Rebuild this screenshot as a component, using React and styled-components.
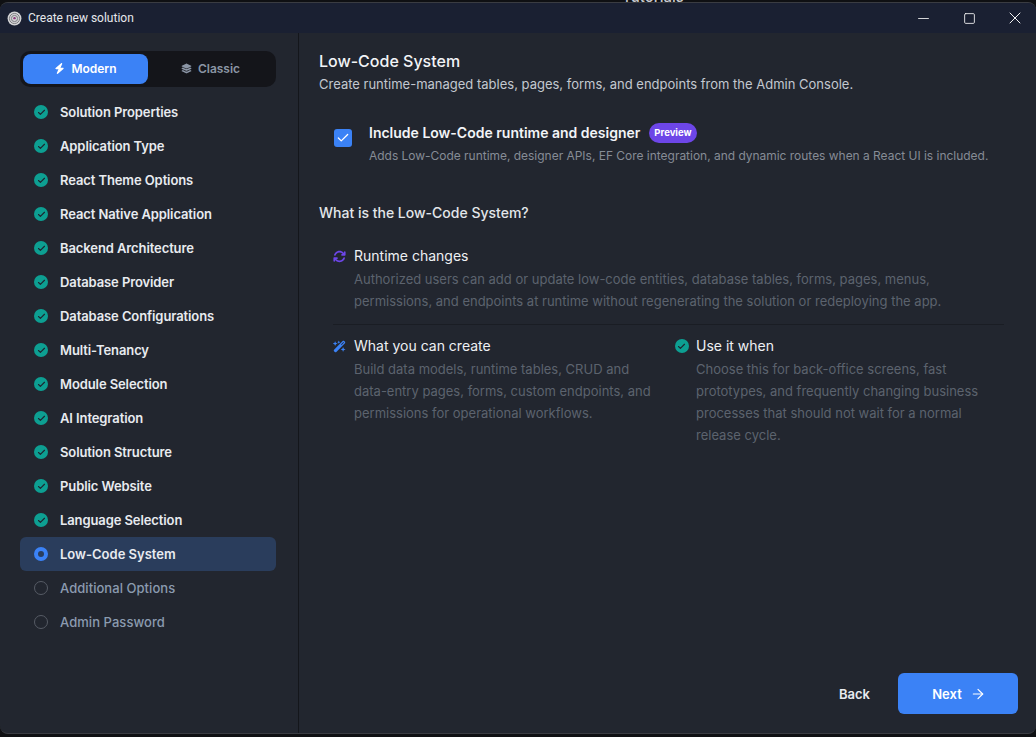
import React from "react";
import styled, { createGlobalStyle } from "styled-components";
import { ArrowRight, Check, Minus, Square, X } from "lucide-react";
import { FaBolt, FaLayerGroup, FaArrowsRotate, FaWandMagicSparkles } from "react-icons/fa6";

const GlobalStyle = createGlobalStyle`
  html, body {
    margin: 0;
    height: 100%;
    background: #0f1013;
    font-family: Inter, "Noto Sans", sans-serif;
    overflow: hidden;
  }
  * { box-sizing: border-box; }
`;

const steps = [
  { label: "Solution Properties", state: "done" },
  { label: "Application Type", state: "done" },
  { label: "React Theme Options", state: "done" },
  { label: "React Native Application", state: "done" },
  { label: "Backend Architecture", state: "done" },
  { label: "Database Provider", state: "done" },
  { label: "Database Configurations", state: "done" },
  { label: "Multi-Tenancy", state: "done" },
  { label: "Module Selection", state: "done" },
  { label: "AI Integration", state: "done" },
  { label: "Solution Structure", state: "done" },
  { label: "Public Website", state: "done" },
  { label: "Language Selection", state: "done" },
  { label: "Low-Code System", state: "active" },
  { label: "Additional Options", state: "todo" },
  { label: "Admin Password", state: "todo" },
];

const StepMark = ({ state }) => {
  if (state === "done") return <DoneDot><Check size={9} strokeWidth={3} /></DoneDot>;
  if (state === "active") return <ActiveDot />;
  return <TodoDot />;
};

const App = () => {
  return (
    <>
      <GlobalStyle />
      <Screen>
        <TopStrip>
          <BehindTitle>Tutorials</BehindTitle>
        </TopStrip>
        <Window>
          <TitleBar>
            <TitleLeft>
              <AppLogo viewBox="0 0 16 16">
                <circle cx="8" cy="8" r="7.4" fill="#d4d4d6" />
                <circle cx="8" cy="8" r="5.4" fill="none" stroke="#77787c" strokeWidth="1" />
                <circle cx="8" cy="8" r="3.3" fill="none" stroke="#77787c" strokeWidth="1" />
                <circle cx="8" cy="7.6" r="1.3" fill="#8a3a7a" />
              </AppLogo>
              <WindowTitle>Create new solution</WindowTitle>
            </TitleLeft>
            <WindowControls>
              <ControlButton><Minus size={17} strokeWidth={1.2} /></ControlButton>
              <ControlButton><Square size={13} strokeWidth={1.6} /></ControlButton>
              <ControlButton><X size={20} strokeWidth={1.2} /></ControlButton>
            </WindowControls>
          </TitleBar>
          <Body>
            <Sidebar>
              <ModeToggle>
                <ModeButton $active>
                  <FaBolt size={11} />
                  Modern
                </ModeButton>
                <ModeButton>
                  <FaLayerGroup size={11} />
                  Classic
                </ModeButton>
              </ModeToggle>
              <StepList>
                {steps.map((step) => (
                  <StepRow key={step.label} $state={step.state}>
                    <StepMark state={step.state} />
                    {step.label}
                  </StepRow>
                ))}
              </StepList>
            </Sidebar>
            <Main>
              <Heading>Low-Code System</Heading>
              <Intro>Create runtime-managed tables, pages, forms, and endpoints from the Admin Console.</Intro>
              <OptionRow>
                <CheckBox><Check size={14} strokeWidth={2.2} /></CheckBox>
                <div>
                  <OptionTitle>
                    Include Low-Code runtime and designer
                    <PreviewBadge>Preview</PreviewBadge>
                  </OptionTitle>
                  <OptionText>
                    Adds Low-Code runtime, designer APIs, EF Core integration, and dynamic routes when a React UI is included.
                  </OptionText>
                </div>
              </OptionRow>
              <SubHeading>What is the Low-Code System?</SubHeading>
              <InfoBlock>
                <InfoTitle>
                  <IconSlot $color="#6d46e8"><FaArrowsRotate size={13} /></IconSlot>
                  Runtime changes
                </InfoTitle>
                <InfoText $width={600}>
                  Authorized users can add or update low-code entities, database tables, forms, pages, menus,
                  permissions, and endpoints at runtime without regenerating the solution or redeploying the app.
                </InfoText>
              </InfoBlock>
              <Divider />
              <InfoColumns>
                <InfoBlock>
                  <InfoTitle>
                    <IconSlot $color="#3b82f6"><FaWandMagicSparkles size={13} /></IconSlot>
                    What you can create
                  </InfoTitle>
                  <InfoText $width={300}>
                    Build data models, runtime tables, CRUD and data-entry pages, forms, custom endpoints, and
                    permissions for operational workflows.
                  </InfoText>
                </InfoBlock>
                <InfoBlock>
                  <InfoTitle>
                    <IconSlot><DoneDot><Check size={9} strokeWidth={3} /></DoneDot></IconSlot>
                    Use it when
                  </InfoTitle>
                  <InfoText $width={300}>
                    Choose this for back-office screens, fast prototypes, and frequently changing business
                    processes that should not wait for a normal release cycle.
                  </InfoText>
                </InfoBlock>
              </InfoColumns>
              <Footer>
                <BackButton>Back</BackButton>
                <NextButton>
                  Next
                  <ArrowRight size={16} strokeWidth={1.8} />
                </NextButton>
              </Footer>
            </Main>
          </Body>
        </Window>
      </Screen>
    </>
  );
};

export default App;

// -------------------- Styles --------------------
const Screen = styled.div`
  width: 1036px;
  height: 737px;
  display: flex;
  flex-direction: column;
  padding-bottom: 3px;
`;

// bottom of the window behind this one, only a sliver shows
const TopStrip = styled.div`
  height: 2px;
  flex-shrink: 0;
  display: flex;
  align-items: flex-end;
  padding-left: 622px;
  overflow: hidden;
`;

const BehindTitle = styled.span`
  margin-bottom: -2px;
  font-size: 15px;
  line-height: 15px;
  font-weight: 500;
  color: #c8cad0;
`;

const Window = styled.div`
  flex: 1;
  min-height: 0;
  display: flex;
  flex-direction: column;
  background: #22262f;
  border-top: 1px solid #3a3c42;
  border-bottom: 1px solid #3a3c42;
  border-radius: 8px;
  overflow: hidden;
`;

const TitleBar = styled.div`
  height: 30px;
  flex-shrink: 0;
  display: flex;
  align-items: center;
  justify-content: space-between;
  background: #1a2032;
  padding-left: 7px;
`;

const TitleLeft = styled.div`
  display: flex;
  align-items: center;
  gap: 6px;
`;

const AppLogo = styled.svg`
  width: 15px;
  height: 15px;
`;

const WindowTitle = styled.span`
  font-family: Roboto, "Noto Sans", sans-serif;
  font-size: 12px;
  color: #e6e8ec;
`;

const WindowControls = styled.div`
  display: flex;
  align-items: center;
  margin-right: -2px;
`;

const ControlButton = styled.div`
  width: 46px;
  height: 30px;
  display: flex;
  align-items: center;
  justify-content: center;
  color: #f4f4f4;
`;

const Body = styled.div`
  flex: 1;
  display: flex;
  min-height: 0;
`;

const Sidebar = styled.aside`
  width: 299px;
  flex-shrink: 0;
  padding: 18px 22px 0 20px;
  border-right: 1px solid #14161b;
`;

const ModeToggle = styled.div`
  height: 36px;
  display: grid;
  grid-template-columns: 125px 1fr;
  padding: 3px;
  background: #14151a;
  border-radius: 10px;
`;

const ModeButton = styled.div`
  display: flex;
  align-items: center;
  justify-content: center;
  gap: 6px;
  padding-bottom: 1px;
  font-size: 12px;
  font-weight: 600;
  border-radius: 8px;
  color: ${({ $active }) => ($active ? "#ffffff" : "#8b95a5")};
  background: ${({ $active }) => ($active ? "#3b82f6" : "transparent")};
`;

const StepList = styled.div`
  margin-top: 8px;
`;

const StepRow = styled.div`
  height: 34px;
  display: flex;
  align-items: center;
  gap: 12px;
  padding-left: 14px;
  border-radius: 6px;
  font-size: 13px;
  letter-spacing: ${({ $state }) => ($state === "done" ? "-0.1px" : $state === "todo" ? "0.05px" : "0")};
  font-weight: ${({ $state }) => ($state === "todo" ? 500 : 600)};
  color: ${({ $state }) => ($state === "todo" ? "#8b9bb0" : "#e8ebf0")};
  background: ${({ $state }) => ($state === "active" ? "#2a3d5c" : "transparent")};
`;

const DoneDot = styled.span`
  width: 14px;
  height: 14px;
  flex-shrink: 0;
  display: flex;
  align-items: center;
  justify-content: center;
  border-radius: 50%;
  background: #0d9f92;
  color: #1d2530;
`;

const ActiveDot = styled.span`
  width: 14px;
  height: 14px;
  flex-shrink: 0;
  border-radius: 50%;
  border: 4px solid #3b82f6;
  background: #2a3d5c;
`;

const TodoDot = styled.span`
  width: 14px;
  height: 14px;
  flex-shrink: 0;
  border-radius: 50%;
  border: 1.5px solid #565b65;
`;

const Main = styled.main`
  flex: 1;
  min-width: 0;
  display: flex;
  flex-direction: column;
  padding: 17px 18px 19px 20px;
`;

const Heading = styled.h1`
  margin: 0;
  font-size: 16px;
  line-height: 22px;
  font-weight: 500;
  color: #f2f4f7;
`;

const Intro = styled.p`
  margin: 2px 0 0;
  font-size: 13px;
  line-height: 20px;
  color: #c3c8d0;
`;

const OptionRow = styled.div`
  display: flex;
  align-items: flex-start;
  gap: 17px;
  margin: 28px 0 0 15px;
`;

const CheckBox = styled.span`
  width: 18px;
  height: 18px;
  margin-top: 7px;
  flex-shrink: 0;
  display: flex;
  align-items: center;
  justify-content: center;
  border-radius: 3px;
  background: #3b82f6;
  color: #fff;
`;

const OptionTitle = styled.div`
  display: flex;
  align-items: center;
  gap: 9px;
  font-size: 14px;
  line-height: 22px;
  font-weight: 600;
  color: #f2f4f7;
`;

const PreviewBadge = styled.span`
  height: 20px;
  padding: 0 5px;
  display: inline-flex;
  align-items: center;
  border-radius: 10px;
  background: #6d46e8;
  color: #fff;
  font-size: 9.5px;
  font-weight: 700;
`;

const OptionText = styled.div`
  margin-top: 3px;
  font-size: 11.96px;
  line-height: 18px;
  color: #868c96;
`;

const SubHeading = styled.h2`
  margin: 38px 0 22px;
  font-size: 14px;
  line-height: 20px;
  font-weight: 500;
  color: #e3e6ea;
`;

const InfoBlock = styled.section`
  padding-left: 14px;
`;

const InfoTitle = styled.div`
  display: flex;
  align-items: center;
  gap: 8px;
  font-size: 14px;
  line-height: 22px;
  font-weight: 400;
  color: #eef0f3;
`;

const IconSlot = styled.span`
  width: 13px;
  flex-shrink: 0;
  display: flex;
  align-items: center;
  justify-content: center;
  color: ${({ $color }) => $color || "inherit"};
`;

const InfoText = styled.p`
  margin: 1px 0 0 21px;
  max-width: ${({ $width }) => $width}px;
  font-size: 13px;
  line-height: 22px;
  color: #5c636e;
`;

const Divider = styled.hr`
  width: 671px;
  margin: 12px 0 10px 14px;
  border: none;
  border-top: 1px solid #1a1d24;
`;

const InfoColumns = styled.div`
  display: grid;
  grid-template-columns: 342px 1fr;
`;

const Footer = styled.div`
  margin-top: auto;
  display: flex;
  align-items: center;
  justify-content: flex-end;
  gap: 28px;
`;

const BackButton = styled.div`
  font-size: 13px;
  font-weight: 600;
  color: #e8ebf0;
`;

const NextButton = styled.div`
  width: 120px;
  height: 41px;
  display: flex;
  align-items: center;
  justify-content: center;
  gap: 8px;
  padding-left: 2px;
  border-radius: 6px;
  background: #3b82f6;
  color: #fff;
  font-size: 13px;
  font-weight: 600;
`;
